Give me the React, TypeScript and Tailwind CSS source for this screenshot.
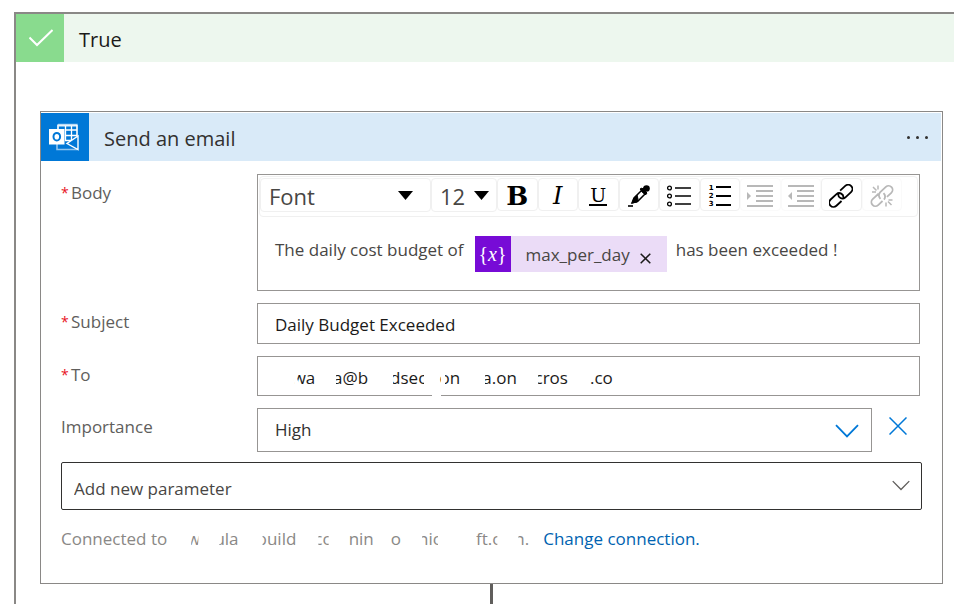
import type { ReactNode } from "react";

function Chevron({ className }: { className: string }) {
  return (
    <svg viewBox="0 0 24 14" fill="none" stroke="currentColor" className={className} aria-hidden="true">
      <path d="M1 1.200 12 12.400 23 1.200" strokeWidth="1.800" />
    </svg>
  );
}

function Caret({ className }: { className: string }) {
  return (
    <svg viewBox="0 0 15 9" width="15" height="9" className={className} aria-hidden="true">
      <path d="M0 0h15L7.500 9z" fill="#000" />
    </svg>
  );
}

function OutlookIcon() {
  return (
    <svg viewBox="0 0 30 28" width="30" height="28" fill="none" aria-hidden="true">
      <path d="M9 1.500h19v15M8 20v6.500h20.500" stroke="#8fc4ee" strokeWidth="1.600" />
      <path d="M9 1.500v5M9 2.500h19" stroke="#e6f2fc" strokeWidth="1.800" />
      <path d="M16 7h12M16 12.500h12M16 17.500h6M16.500 3v15M22.500 3v14M28 2v11" stroke="#fff" strokeWidth="1.300" />
      <path d="M29 13v13.500L18 20.500z" fill="#0078d7" stroke="#fff" strokeWidth="1.400" />
      <rect x="0" y="6" width="15.500" height="15.500" fill="#fff" />
      <ellipse cx="7.800" cy="13.700" rx="3.300" ry="3.800" stroke="#0078d7" strokeWidth="2" />
    </svg>
  );
}

function Tool({ label, disabled, children }: { label: string; disabled?: boolean; children: ReactNode }) {
  return (
    <button
      type="button"
      aria-label={label}
      disabled={disabled}
      className="flex h-[33px] flex-1 items-center justify-center rounded-sm border border-[#f0f0f0] pt-[2px] text-black disabled:border-[#fafafa] disabled:text-[#b8b8b8]"
    >
      {children}
    </button>
  );
}

function Indent({ out }: { out?: boolean }) {
  return (
    <svg viewBox="0 0 26 22" width="26" height="22" aria-hidden="true">
      <path d="M0 1h26M9 6h17M9 11h17M9 16h17M0 21h26" stroke="currentColor" strokeWidth="1.800" />
      <path d={out ? "M4 7v8L0 11z" : "M0 7v8l4-4z"} fill="currentColor" />
    </svg>
  );
}

function Link({ broken }: { broken?: boolean }) {
  return (
    <svg viewBox="0 0 24 24" width="24" height="24" fill="none" stroke="currentColor" aria-hidden="true">
      <g transform="rotate(-43 12 12)" strokeWidth="1.800">
        {broken ? (
          <path d="M11 8H3a4 4 0 0 0 0 8h6M15 16h6a4 4 0 0 0 0-8h-8M9 13c0-3 1-4.500 4-5M15 11c0 3-1 4.500-4 5" />
        ) : (
          <path d="M9 16H2a4.250 4.250 0 0 1 0-8.500h8a4.250 4.250 0 0 1 2.500 7.500M15 7.500h7a4.250 4.250 0 0 1 0 8.500h-8a4.250 4.250 0 0 1-2.500-7.500" />
        )}
      </g>
      {broken && <path d="M8 1.500v4M3 3l3.500 3.500M2 8h4M16 18.500v4M18 17.500l3.500 3.500M18.500 16h4" strokeWidth="1.500" />}
    </svg>
  );
}

function Row({ id, label, required, children }: { id: string; label: string; required?: boolean; children: ReactNode }) {
  return (
    <div className="flex items-start">
      <label htmlFor={id} id={id + "-label"} className="flex h-[38px] w-[196px] shrink-0 items-center text-[#605e5c]">
        {required && <span className="w-[10px] text-sm text-[#e81123]">*</span>}
        {label}
      </label>
      <div className="flex min-w-0 flex-1">{children}</div>
    </div>
  );
}

export default function App() {
  return (
    <main className="flex min-h-screen flex-col overflow-hidden bg-white pt-3 pl-[14px] font-['Open_Sans','Noto_Sans',sans-serif] text-[17px] text-[#484644]">
      <section className="flex flex-1 flex-col border-t-2 border-l-2 border-[#8a8886]">
        <header className="flex h-12 items-center bg-[#edf7ee]">
          <div className="flex size-12 items-center justify-center bg-[#89db8e] pl-[2px]">
            <svg viewBox="0 0 24 18" width="24" height="18" fill="none" aria-hidden="true">
              <path d="M.5 8.500 8 16 23.500 1" stroke="#fff" strokeWidth="2" />
            </svg>
          </div>
          <h1 className="ml-[15px] pt-1 text-xl text-[#1b1a19]">True</h1>
        </header>

        <div className="mt-[49px] mr-[11px] ml-6 flex flex-1 flex-col">
          <form className="border border-[#8a8886] pt-px">
            <header className="mr-px flex h-12 items-center bg-[#d9eaf8] pr-[13px]">
              <div className="flex size-12 items-center justify-center bg-[#0078d7] pr-[2px]">
                <OutlookIcon />
              </div>
              <h2 className="ml-[15px] flex-1 pt-1 text-xl text-[#323130]">Send an email</h2>
              <button type="button" aria-label="More options" className="flex gap-[6px]">
                <span className="size-[3px] rounded-full bg-[#323130]" />
                <span className="size-[3px] rounded-full bg-[#323130]" />
                <span className="size-[3px] rounded-full bg-[#323130]" />
              </button>
            </header>

            <div className="flex flex-col gap-3 pt-[13px] pr-[22px] pl-5">
              <Row id="body" label="Body" required>
                <div className="min-w-0 flex-1 border border-[#979593] p-px">
                  <div className="flex h-[41px] items-start rounded-sm border border-[#f0f0f0] pt-px">
                    <div className="relative h-[34px] w-[171px] rounded-sm border border-[#f0f0f0]">
                      <select aria-label="Font" className="h-full w-full appearance-none pt-px pl-2 text-[22px]">
                        <option>Font</option>
                      </select>
                      <Caret className="pointer-events-none absolute top-3 right-[17px]" />
                    </div>
                    <div className="relative h-[34px] w-[66px] rounded-sm border border-[#f0f0f0]">
                      <select aria-label="Font size" className="h-full w-full appearance-none pt-px pl-2 text-[22px]">
                        <option>12</option>
                      </select>
                      <Caret className="pointer-events-none absolute top-3 right-[7px]" />
                    </div>
                    <div className="flex w-[405px]">
                      <Tool label="Bold">
                        <span className="font-['DejaVu_Serif',serif] text-[26px] leading-8 font-bold">B</span>
                      </Tool>
                      <Tool label="Italic">
                        <span className="font-['DejaVu_Serif',serif] text-2xl leading-8 italic">I</span>
                      </Tool>
                      <Tool label="Underline">
                        <span className="border-b-2 border-black px-px font-['DejaVu_Serif',serif] text-[19px] leading-[18px]">U</span>
                      </Tool>
                      <Tool label="Text color">
                        <svg viewBox="0 0 22 22" width="22" height="22" aria-hidden="true">
                          <path d="M4 18 6 13 13.500 5.500 17 9 9.500 16.500z" fill="#fff" stroke="#000" strokeWidth="1.500" />
                          <path d="M4 18 6 13l3-3 1 4-1 3zM12 4l2-1 5 5-1.500 2z" fill="#000" stroke="#000" />
                          <circle cx="18.500" cy="3.500" r="3.300" fill="#000" />
                          <path d="m14 7 4-4" stroke="#000" strokeWidth="4" />
                          <path d="M0 21h5" stroke="#000" strokeWidth="1.600" />
                        </svg>
                      </Tool>
                      <Tool label="Bulleted list">
                        <svg viewBox="0 0 24 22" width="24" height="22" fill="none" stroke="#000" aria-hidden="true">
                          <path d="M8 3h16M8 11h16M8 19h16" strokeWidth="1.400" />
                          <g strokeWidth="1.300">
                            <circle cx="2.500" cy="3" r="1.900" />
                            <circle cx="2.500" cy="11" r="1.900" />
                            <circle cx="2.500" cy="19" r="1.900" />
                          </g>
                        </svg>
                      </Tool>
                      <Tool label="Numbered list">
                        <span className="flex items-center gap-[2px]">
                          <span className="flex flex-col font-['DejaVu_Sans',sans-serif] text-[7px] leading-[8px] font-bold">
                            <span>1</span>
                            <span>2</span>
                            <span>3</span>
                          </span>
                          <span className="flex w-[15px] flex-col gap-[7px]">
                            <span className="h-[2px] bg-black" />
                            <span className="h-[2px] bg-black" />
                            <span className="h-[2px] bg-black" />
                          </span>
                        </span>
                      </Tool>
                      <Tool label="Indent" disabled>
                        <Indent />
                      </Tool>
                      <Tool label="Outdent" disabled>
                        <Indent out />
                      </Tool>
                      <Tool label="Insert link">
                        <Link />
                      </Tool>
                      <Tool label="Remove link" disabled>
                        <Link broken />
                      </Tool>
                    </div>
                  </div>
                  <div
                    id="body"
                    role="textbox"
                    aria-labelledby="body-label"
                    className="flex items-start pt-[19px] pb-[17px] pl-4 leading-7 whitespace-nowrap"
                  >
                    <span>The daily cost budget of</span>
                    <span className="mr-[9px] ml-[11px] flex h-9 bg-[#ebdcf7] pr-4">
                      <span className="flex w-9 items-center justify-center bg-[#770bd6] font-['Liberation_Serif',serif] text-xl text-white">
                        {"{"}
                        <i>x</i>
                        {"}"}
                      </span>
                      <span className="ml-[15px] leading-[38px]">max_per_day</span>
                      <button type="button" aria-label="Remove max_per_day" className="ml-[10px] pt-2">
                        <svg viewBox="0 0 11 11" width="11" height="11" fill="none" stroke="#1b1a19" strokeWidth="1.500" aria-hidden="true">
                          <path d="m.7.7 9.600 9.600M10.300.7.700 10.300" />
                        </svg>
                      </button>
                    </span>
                    <span>has been exceeded !</span>
                  </div>
                </div>
              </Row>

              <Row id="subject" label="Subject" required>
                <input
                  id="subject"
                  defaultValue="Daily Budget Exceeded"
                  className="h-[41px] w-full border border-[#979593] px-[17px] pt-[2px] text-[#1b1a19]"
                />
              </Row>

              <Row id="to" label="To" required>
                <div className="relative flex-1">
                  <input
                    id="to"
                    defaultValue={"    wa    a@b     dsec   on     a.on    cros     .co"}
                    className="block h-10 w-full border border-[#979593] px-[17px] pt-[2px] text-[#1b1a19]"
                  />
                  {/* Erased strokes over the redacted address */}
                  <span className="pointer-events-none absolute top-2 left-[35px] h-6 w-1 rotate-[-20deg] bg-white" />
                  <span className="pointer-events-none absolute top-2 left-[75px] h-6 w-1 bg-white" />
                  <span className="pointer-events-none absolute top-2 left-[132px] h-6 w-1 bg-white" />
                  <span className="pointer-events-none absolute top-2 left-[167px] h-6 w-1 bg-white" />
                  <span className="pointer-events-none absolute top-2 left-[184px] h-6 w-1 bg-white" />
                  <span className="pointer-events-none absolute top-2 left-[224px] h-6 w-1 bg-white" />
                  <span className="pointer-events-none absolute top-2 left-[277px] h-6 w-1 bg-white" />
                  <span className="pointer-events-none absolute bottom-0 left-[175px] h-[2px] w-[9px] bg-white" />
                </div>
              </Row>

              <Row id="importance" label="Importance">
                <div className="relative flex-1">
                  <select
                    id="importance"
                    className="h-11 w-full appearance-none border border-[#979593] px-[17px] text-[#323130]"
                  >
                    <option>High</option>
                  </select>
                  <Chevron className="pointer-events-none absolute top-4 right-[13px] h-[14px] w-6 text-[#0078d7]" />
                </div>
                <button type="button" aria-label="Remove Importance" className="-mr-1 flex h-9 w-[52px] items-center justify-center">
                  <svg viewBox="0 0 18 18" width="18" height="18" fill="none" stroke="#0078d7" strokeWidth="1.500" aria-hidden="true">
                    <path d="m.5.5 17 17M17.500.5.5 17.500" />
                  </svg>
                </button>
              </Row>
            </div>

            <div className="relative mt-[10px] mr-5 ml-5">
              <select
                aria-label="Add new parameter"
                className="h-12 w-full appearance-none rounded-xs border border-[#323130] px-3 pt-[6px]"
              >
                <option>Add new parameter</option>
              </select>
              <Chevron className="pointer-events-none absolute top-[18px] right-3 h-[11px] w-[18px] text-[#605e5c]" />
            </div>

            <p className="mt-4 mb-[31px] ml-5 flex h-[26px] items-center whitespace-pre text-[#8a8886]">
              Connected to
              <span className="ml-5 [clip-path:inset(0_2px_0_4px)]">w</span>
              <span className="ml-[14px] [clip-path:inset(0_0_0_5px)]">ula</span>
              <span className="ml-[18px] [clip-path:inset(0_0_0_6px)]">build</span>
              <span className="ml-[18px] [clip-path:inset(0_2px_0_4px)]">cc</span>
              <span className="ml-[18px]">nin</span>
              <span className="ml-[17px]">o</span>
              <span className="ml-[17px] [clip-path:inset(0_3px_0_4px)]">nic</span>
              <span className="ml-[35px] [clip-path:inset(0_3px_0_0)]">ft.c</span>
              <span className="ml-[14px] [clip-path:inset(0_0_0_4px)]">n.</span>
              <a href="#connection" className="ml-[14px] text-[#0063b1]">
                Change connection.
              </a>
            </p>
          </form>
          <div className="w-[3px] flex-1 self-center bg-[#605e5c]" />
        </div>
      </section>
    </main>
  );
}
